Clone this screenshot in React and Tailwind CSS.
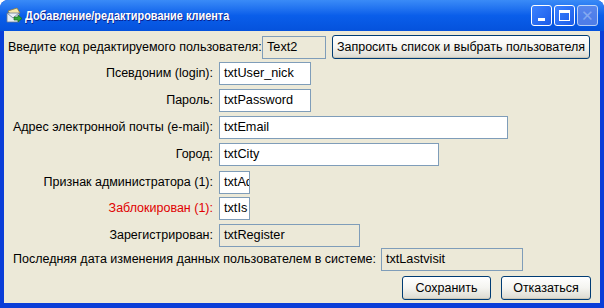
import React from "react";

const font = { fontFamily: '"Liberation Sans", Arial, sans-serif' };

function Field({ value, w, disabled }) {
  return (
    <div
      className={`h-[23px] ${w} shrink-0 overflow-hidden border border-[#7F9DB9] px-[4px] text-[12.7px] leading-[21px] text-black whitespace-nowrap ${
        disabled ? "bg-[#ECE9D8]" : "bg-white"
      }`}
    >
      {value}
    </div>
  );
}

function XpButton({ children, w }) {
  return (
    <button
      className={`h-[24px] ${w} shrink-0 whitespace-nowrap rounded-[3px] border border-[#003C74] bg-gradient-to-b from-white via-[#F4F4F0] to-[#DCDAD0] text-[12.5px] leading-[22px] text-black shadow-[inset_0_-1px_0_#C9C6B8]`}
    >
      {children}
    </button>
  );
}

function Row({ label, value, w, disabled, red, mt }) {
  return (
    <div className={`flex items-center ${mt}`}>
      <div
        className={`w-[209px] shrink-0 whitespace-nowrap text-right text-[12.5px] ${
          red ? "text-[#E00000]" : "text-black"
        }`}
      >
        {label}
      </div>
      <div className="w-[6px] shrink-0" />
      <Field value={value} w={w} disabled={disabled} />
    </div>
  );
}

function TitleIcon() {
  return (
    <svg width="17" height="17" viewBox="0 0 17 17">
      <path d="M2 4 L11 1 L14 6 L5 9 Z" fill="#F5E6A8" stroke="#8A7A40" strokeWidth="0.8" />
      <path d="M1 6 L13 6 L13 15 L1 15 Z" fill="#E8EEF6" stroke="#6A7A90" strokeWidth="0.8" />
      <path d="M1 6 L7 11 L13 6" fill="none" stroke="#6A7A90" strokeWidth="0.8" />
      <path d="M8 10 L12 10 L12 8 L16 11.5 L12 15 L12 13 L8 13 Z" fill="#2FA83A" stroke="#17691F" strokeWidth="0.7" />
    </svg>
  );
}

function CtrlBtn({ children, faded }) {
  return (
    <div
      className={`flex h-[21px] w-[21px] items-center justify-center rounded-[3px] border border-white ${
        faded ? "bg-[#6E8EEA] opacity-70" : "bg-gradient-to-br from-[#3C82FF] to-[#1B5BE8]"
      }`}
    >
      {children}
    </div>
  );
}

export default function App() {
  return (
    <div className="h-[308px] w-[604px] overflow-hidden bg-white" style={font}>
      <div className="flex h-full w-full flex-col overflow-hidden rounded-t-[8px] bg-[#0A3ED8]">
        {/* Title bar */}
        <div className="flex h-[31px] shrink-0 items-center bg-gradient-to-b from-[#3A8BF7] via-[#0A5EEA] to-[#0552DC] pl-[6px] pr-[6px]">
          <TitleIcon />
          <span className="ml-[2px] origin-left scale-x-[0.84] whitespace-nowrap text-[13px] font-bold text-white [text-shadow:1px_1px_0_#0A1E8A]">
            Добавление/редактирование клиента
          </span>
          <div className="ml-auto flex gap-[2px]">
            <CtrlBtn>
              <div className="mt-[8px] h-[3px] w-[7px] bg-white" />
            </CtrlBtn>
            <CtrlBtn>
              <div className="h-[11px] w-[11px] border border-t-[3px] border-white" />
            </CtrlBtn>
            <CtrlBtn faded>
              <span className="text-[15px] leading-none text-[#B8C8F4]">✕</span>
            </CtrlBtn>
          </div>
        </div>

        {/* Body */}
        <div className="mx-[4px] mb-[5px] flex flex-1 flex-col bg-[#ECE9D8] pt-[4px]">
          <div className="flex items-center">
            <div className="ml-[4px] whitespace-nowrap text-[12.5px] text-black">
              Введите код редактируемого пользователя:
            </div>
            <div className="ml-auto mr-[10px] flex items-center">
              <Field value="Text2" w="w-[64px]" disabled />
              <div className="w-[6px]" />
              <XpButton w="w-[258px]">Запросить список и выбрать пользователя</XpButton>
            </div>
          </div>
          <Row mt="mt-[3px]" label="Псевдоним (login):" value="txtUser_nick" w="w-[92px]" />
          <Row mt="mt-[4px]" label="Пароль:" value="txtPassword" w="w-[92px]" />
          <Row mt="mt-[4px]" label="Адрес электронной почты (e-mail):" value="txtEmail" w="w-[289px]" />
          <Row mt="mt-[4px]" label="Город:" value="txtCity" w="w-[220px]" />
          <Row mt="mt-[5px]" label="Признак администратора (1):" value="txtAdmin" w="w-[31px]" />
          <Row mt="mt-[3px]" label="Заблокирован (1):" value="txtIs" w="w-[31px]" red />
          <Row mt="mt-[4px]" label="Зарегистрирован:" value="txtRegister" w="w-[141px]" disabled />
          <div className="mt-[1px] flex items-center">
            <div className="ml-[9px] whitespace-nowrap text-[12.5px] text-black">
              Последняя дата изменения данных пользователем в системе:
            </div>
            <div className="w-[5px]" />
            <Field value="txtLastvisit" w="w-[142px]" disabled />
          </div>
          <div className="mt-[5px] flex justify-end gap-[10px] pr-[9px]">
            <XpButton w="w-[89px]">Сохранить</XpButton>
            <XpButton w="w-[90px]">Отказаться</XpButton>
          </div>
        </div>
      </div>
    </div>
  );
}
